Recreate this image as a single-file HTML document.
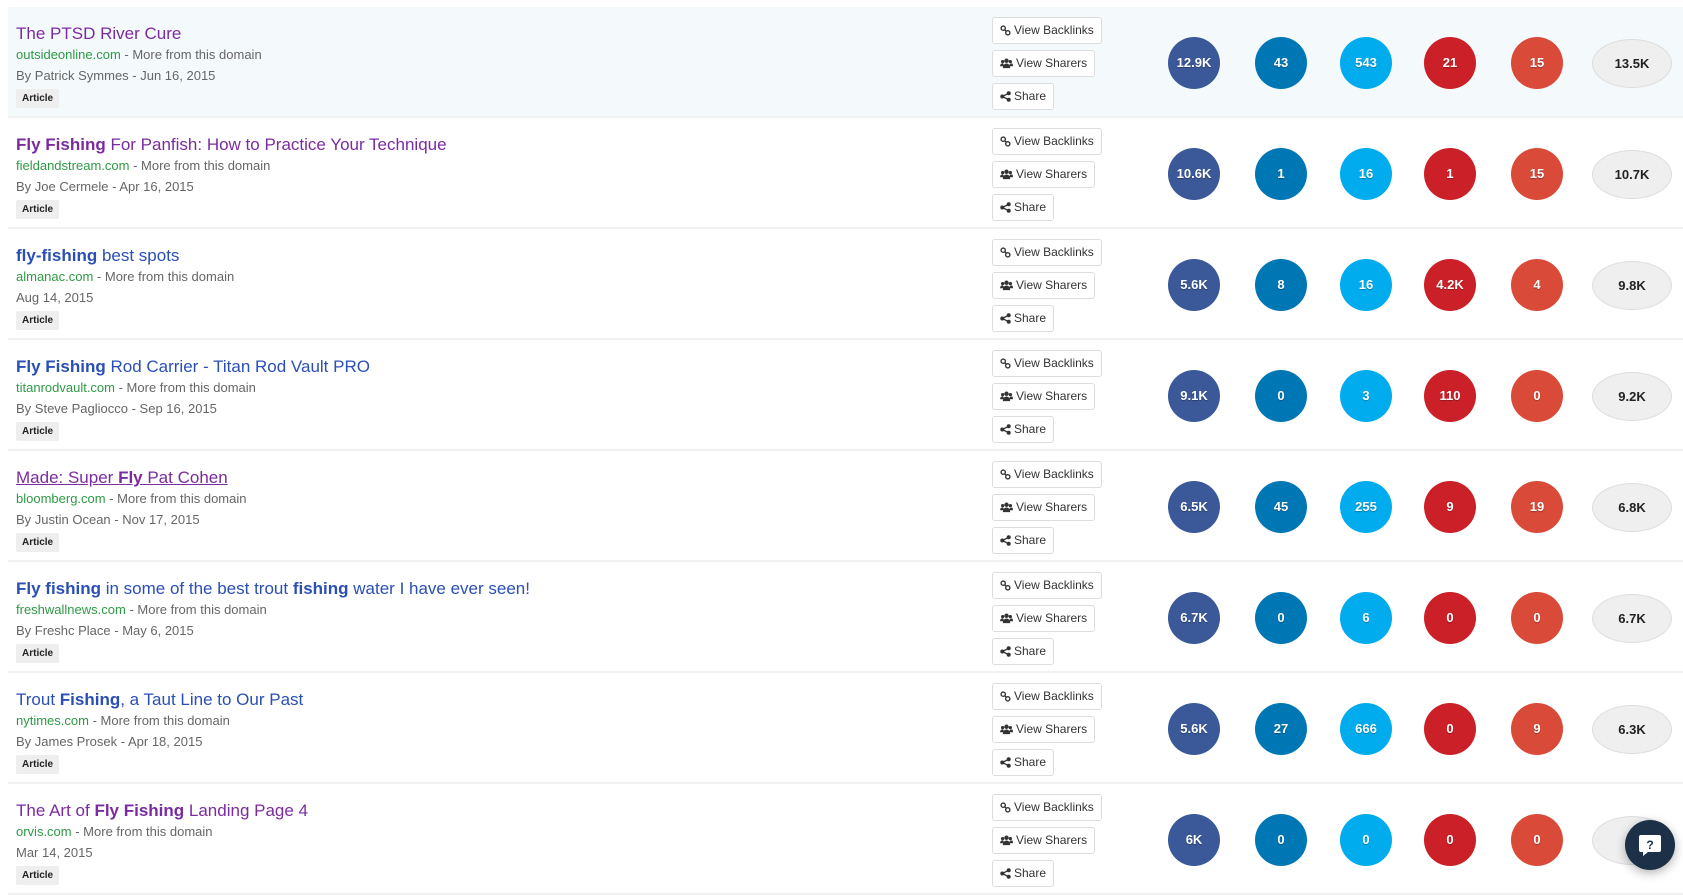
<!DOCTYPE html>
<html><head><meta charset="utf-8"><style>
*{margin:0;padding:0;box-sizing:border-box}
body{width:1683px;height:888px;overflow:hidden;background:#fff;font-family:"Liberation Sans",Arial,sans-serif;position:relative}
.row{position:absolute;left:8px;width:1675px;height:111px;border-bottom:2px solid #f1f1f1}
.row.hl{background:#f4f9fc}
.t{position:absolute;left:8px;top:17px;font-size:17px;white-space:nowrap;color:#2a4fb5}
.t.v{color:#7b2ba0}
.t b{font-weight:bold}
.t.u{text-decoration:underline}
.d{position:absolute;left:8px;top:40px;font-size:13px;color:#666;white-space:nowrap}
.d span{color:#2e9a45}
.a{position:absolute;left:8px;top:61px;font-size:13px;color:#666;white-space:nowrap}
.tag{position:absolute;left:8px;top:82px;height:19px;padding:0 6px;background:#eee;border-radius:2px;font-size:10px;font-weight:bold;color:#222;line-height:19px}
.btn{position:absolute;left:992px;height:27px;border:1px solid #ddd;border-radius:3px;background:#fff;font-size:12px;color:#333;line-height:25px;padding:0 7px;white-space:nowrap}
.btn svg{vertical-align:-2px;margin-right:3px}
.c{position:absolute;width:52px;height:52px;border-radius:50%;color:#fff;font-weight:bold;font-size:13px;text-align:center;line-height:52px;text-shadow:0 1px 1px rgba(0,0,0,.3)}
.e{position:absolute;left:1592px;width:80px;height:49px;border-radius:50%;background:#efefef;border:1px solid #ddd;font-weight:bold;font-size:13px;text-align:center;line-height:47px;color:#222}
.chat{position:absolute;left:1625px;top:820px;width:50px;height:50px;border-radius:50%;background:#1c3047;box-shadow:0 3px 10px rgba(0,0,0,.3)}
</style></head><body>

<div class="row hl" style="top:7px">
<div class="t v">The PTSD River Cure</div>
<div class="d"><span>outsideonline.com</span> - More from this domain</div>
<div class="a">By Patrick Symmes - Jun 16, 2015</div>
<div class="tag">Article</div>
</div>
<div class="row" style="top:118px">
<div class="t v"><b>Fly Fishing</b> For Panfish: How to Practice Your Technique</div>
<div class="d"><span>fieldandstream.com</span> - More from this domain</div>
<div class="a">By Joe Cermele - Apr 16, 2015</div>
<div class="tag">Article</div>
</div>
<div class="row" style="top:229px">
<div class="t"><b>fly-fishing</b> best spots</div>
<div class="d"><span>almanac.com</span> - More from this domain</div>
<div class="a">Aug 14, 2015</div>
<div class="tag">Article</div>
</div>
<div class="row" style="top:340px">
<div class="t"><b>Fly Fishing</b> Rod Carrier - Titan Rod Vault PRO</div>
<div class="d"><span>titanrodvault.com</span> - More from this domain</div>
<div class="a">By Steve Pagliocco - Sep 16, 2015</div>
<div class="tag">Article</div>
</div>
<div class="row" style="top:451px">
<div class="t v u">Made: Super <b>Fly</b> Pat Cohen</div>
<div class="d"><span>bloomberg.com</span> - More from this domain</div>
<div class="a">By Justin Ocean - Nov 17, 2015</div>
<div class="tag">Article</div>
</div>
<div class="row" style="top:562px">
<div class="t"><b>Fly fishing</b> in some of the best trout <b>fishing</b> water I have ever seen!</div>
<div class="d"><span>freshwallnews.com</span> - More from this domain</div>
<div class="a">By Freshc Place - May 6, 2015</div>
<div class="tag">Article</div>
</div>
<div class="row" style="top:673px">
<div class="t">Trout <b>Fishing</b>, a Taut Line to Our Past</div>
<div class="d"><span>nytimes.com</span> - More from this domain</div>
<div class="a">By James Prosek - Apr 18, 2015</div>
<div class="tag">Article</div>
</div>
<div class="row" style="top:784px">
<div class="t v">The Art of <b>Fly Fishing</b> Landing Page 4</div>
<div class="d"><span>orvis.com</span> - More from this domain</div>
<div class="a">Mar 14, 2015</div>
<div class="tag">Article</div>
</div>

<div id="cols"></div>
<script>
(function(){
var data=[["12.9K","43","543","21","15","13.5K"],["10.6K","1","16","1","15","10.7K"],["5.6K","8","16","4.2K","4","9.8K"],["9.1K","0","3","110","0","9.2K"],["6.5K","45","255","9","19","6.8K"],["6.7K","0","6","0","0","6.7K"],["5.6K","27","666","0","9","6.3K"],["6K","0","0","0","0",""]];
var cols=["#3b5998","#0077b5","#00acee","#cb2027","#d94a38"],xs=[1168,1255,1340,1424,1511];
var link='<svg width="11" height="11" viewBox="0 0 12 12" fill="none" stroke="#333" stroke-width="1.5"><circle cx="3.5" cy="3.5" r="2.3"/><circle cx="8.5" cy="8.5" r="2.3"/><path d="M5 5l2 2"/></svg>';
var ppl='<svg width="13" height="11" viewBox="0 0 14 12" fill="#333"><circle cx="7" cy="3" r="2.4"/><circle cx="2.8" cy="4" r="1.8"/><circle cx="11.2" cy="4" r="1.8"/><path d="M3 11c0-3 1.8-5 4-5s4 2 4 5z"/><path d="M0 9c0-2 1-3 2.5-3S4 7 4 9z"/><path d="M10 9c0-2 1-3 2.5-3S14 7 14 9z"/></svg>';
var sh='<svg width="11" height="11" viewBox="0 0 12 12" fill="#333"><circle cx="9.5" cy="2.5" r="2.2"/><circle cx="2.5" cy="6" r="2.2"/><circle cx="9.5" cy="9.5" r="2.2"/><path d="M2.5 6L9.5 2.5M2.5 6l7 3.5" stroke="#333" stroke-width="1.4"/></svg>';
var h='';
for(var i=0;i<8;i++){var y0=7+111*i;
h+='<div class="btn" style="top:'+(y0+10)+'px">'+link+'View Backlinks</div>';
h+='<div class="btn" style="top:'+(y0+43)+'px">'+ppl+'View Sharers</div>';
h+='<div class="btn" style="top:'+(y0+76)+'px">'+sh+'Share</div>';
for(var j=0;j<5;j++)h+='<div class="c" style="left:'+xs[j]+'px;top:'+(y0+30)+'px;background:'+cols[j]+'">'+data[i][j]+'</div>';
h+='<div class="e" style="top:'+(y0+32)+'px">'+data[i][5]+'</div>';}
document.getElementById('cols').innerHTML=h;
})();
</script>
<div class="chat"><svg width="50" height="50" viewBox="0 0 50 50"><path d="M16 15h18a2 2 0 0 1 2 2v13a2 2 0 0 1-2 2H23l-5 4v-4h-2a2 2 0 0 1-2-2V17a2 2 0 0 1 2-2z" fill="#fff"/><text x="25" y="29" text-anchor="middle" font-family="Liberation Sans" font-weight="bold" font-size="12" fill="#1c3047">?</text></svg></div>
</body></html>
